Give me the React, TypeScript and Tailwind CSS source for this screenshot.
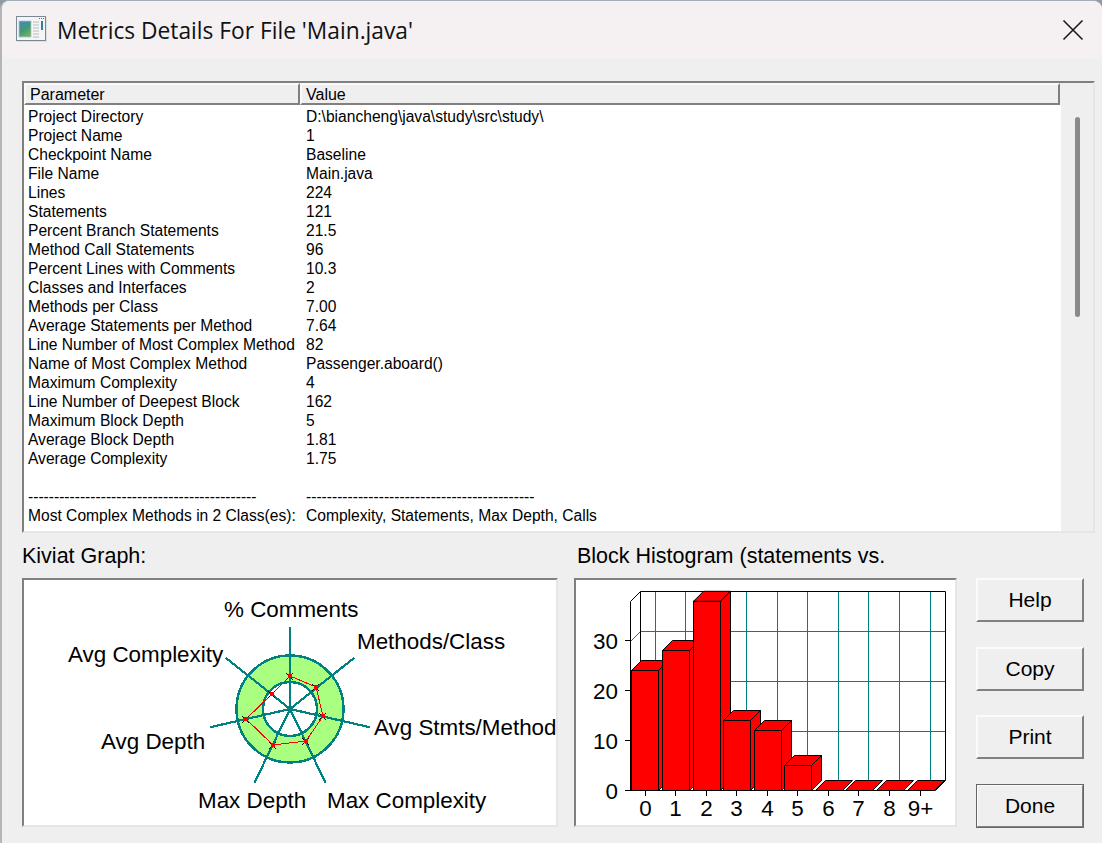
const rows: [string, string][] = [
  ['Project Directory', 'D:\\biancheng\\java\\study\\src\\study\\'],
  ['Project Name', '1'],
  ['Checkpoint Name', 'Baseline'],
  ['File Name', 'Main.java'],
  ['Lines', '224'],
  ['Statements', '121'],
  ['Percent Branch Statements', '21.5'],
  ['Method Call Statements', '96'],
  ['Percent Lines with Comments', '10.3'],
  ['Classes and Interfaces', '2'],
  ['Methods per Class', '7.00'],
  ['Average Statements per Method', '7.64'],
  ['Line Number of Most Complex Method', '82'],
  ['Name of Most Complex Method', 'Passenger.aboard()'],
  ['Maximum Complexity', '4'],
  ['Line Number of Deepest Block', '162'],
  ['Maximum Block Depth', '5'],
  ['Average Block Depth', '1.81'],
  ['Average Complexity', '1.75'],
  ['', ''],
  ['--------------------------------------------', '--------------------------------------------'],
  ['Most Complex Methods in 2 Class(es):', 'Complexity, Statements, Max Depth, Calls'],
]

function TitleIcon() {
  return (
    <svg width="32" height="28" viewBox="0 0 32 28" className="mr-[10px]">
      <defs>
        <linearGradient id="pane" x1="0" y1="0" x2="0.5" y2="1">
          <stop offset="0" stopColor="#4a86b8" />
          <stop offset="0.6" stopColor="#3f9a78" />
          <stop offset="1" stopColor="#6fae5a" />
        </linearGradient>
      </defs>
      <rect x="2" y="1" width="30" height="25" fill="#c9ced3" opacity="0.5" />
      <rect x="1.5" y="0.5" width="29" height="24" fill="#f3f5f7" stroke="#7d8791" />
      <path d="M24 2.5h1M26 2.5h1M28 2.5h1" stroke="#5f6973" />
      <rect x="4" y="5" width="12" height="16" fill="url(#pane)" stroke="#a9c3dc" strokeWidth="0.8" />
      <path d="M18 6h6M18 9h6M18 12h6M18 15h6M18 18h6M18 21h6" stroke="#b9bdb8" />
      <rect x="26" y="5" width="2" height="9" fill="#2f7fa0" />
    </svg>
  )
}

function CloseIcon() {
  return (
    <svg width="22" height="22" viewBox="0 0 22 22">
      <path d="M1.5 1.5 20.5 20.5M20.5 1.5 1.5 20.5" stroke="#1a1a1a" strokeWidth="1.6" />
    </svg>
  )
}

function Sunken({ className, children }: { className: string; children: React.ReactNode }) {
  return (
    <div className={`bg-white border-2 border-t-[#808080] border-l-[#808080] border-r-[#e6e6e6] border-b-[#e6e6e6] ${className}`}>
      {children}
    </div>
  )
}

const center = { x: 290, y: 709 }
const axes = Array.from({ length: 7 }, (_, i) => {
  const a = (i * 2 * Math.PI) / 7
  return { x: center.x + 82 * Math.sin(a), y: center.y - 82 * Math.cos(a) }
})
const kiviatPoints = '290,676 316,687 323,716 306,741 273,745 246,719 272,694'
const kiviatLabels: [string, number, number][] = [
  ['% Comments', 224, 617],
  ['Methods/Class', 357, 649],
  ['Avg Stmts/Method', 374, 735],
  ['Max Complexity', 327, 808],
  ['Max Depth', 198, 808],
  ['Avg Depth', 101, 749],
  ['Avg Complexity', 68, 662],
]

function Kiviat() {
  return (
    <svg width="532" height="245" viewBox="24 580 532 245" className="block">
      <g shapeRendering="crispEdges">
        <circle cx="290" cy="709" r="53.5" fill="#aaff80" stroke="#008080" strokeWidth="2.4" />
        <circle cx="290" cy="709" r="27" fill="#ffffff" stroke="#008080" strokeWidth="2.4" />
        {axes.map((p) => (
          <line key={p.x} x1="290" y1="709" x2={p.x} y2={p.y} stroke="#008080" strokeWidth="2.2" />
        ))}
        <polygon points={kiviatPoints} fill="none" stroke="#ff0000" strokeWidth="1" />
        {kiviatPoints.split(' ').map((p) => {
          const [x, y] = p.split(',').map(Number)
          return (
            <g key={p}>
              <path d={`M${x - 4} ${y - 3}L${x + 3} ${y + 4}M${x + 3} ${y - 3}L${x - 4} ${y + 4}`} stroke="#000" strokeWidth="1" />
              <circle cx={x} cy={y} r="2.4" fill="#ff0000" />
            </g>
          )
        })}
      </g>
      {kiviatLabels.map(([t, x, y]) => (
        <text key={t} x={x} y={y} fontSize="22.4" fill="#000" fontFamily="'Liberation Sans', Arial, sans-serif">
          {t}
        </text>
      ))}
    </svg>
  )
}

const barX = [631, 662, 693, 723, 754, 784, 815, 845, 876, 907]
const barVal = [24, 28, 38, 14, 12, 5, 0, 0, 0, 0]
const tickX = [645, 675, 706, 736, 767, 797, 828, 858, 889, 920]
const tickLabels = ['0', '1', '2', '3', '4', '5', '6', '7', '8', '9+']
const gridX = [655.5, 685.5, 716.5, 746.5, 777.5, 807.5, 838.5, 868.5, 899.5, 930.5]
const gridY = [631.5, 681.5, 731.5]

function Histogram() {
  return (
    <svg width="379" height="245" viewBox="576 580 379 245" className="block">
      {gridX.map((x) => (
        <line key={x} x1={x} y1="591" x2={x} y2="780" stroke="#008080" strokeWidth="1" />
      ))}
      {gridY.map((y) => (
        <g key={y}>
          <line x1="640" y1={y} x2="945" y2={y} stroke="#008080" strokeWidth="1" />
          <line x1="630.5" y1={y + 10} x2="640.5" y2={y} stroke="#008080" strokeWidth="1" />
        </g>
      ))}
      <path d="M640.5 591.5H945.5V780.5H940M640.5 591.5V780M640.5 591.5L630.5 601.5V790.5M945.5 780.5L935.5 790.5H625" fill="none" stroke="#000" strokeWidth="1" />
      {[0, 10, 20, 30].map((v) => (
        <line key={v} x1="625" y1={790.5 - v * 5} x2="631" y2={790.5 - v * 5} stroke="#000" strokeWidth="1" />
      ))}
      {barX.map((x, i) => {
        const top = 790.5 - barVal[i] * 5 + (barVal[i] === 38 ? 0.8 : 0)
        const left = x + 0.5
        const right = left + 27
        return (
          <g key={x} stroke="#000" strokeWidth="1" fill="#ff0000">
            {barVal[i] > 0 && <rect x={left} y={top} width="27" height={790.5 - top} />}
            <polygon points={`${left},${top} ${left + 10},${top - 10} ${right + 10},${top - 10} ${right},${top}`} />
            {barVal[i] > 0 && <polygon points={`${right},${top} ${right + 10},${top - 10} ${right + 10},780.5 ${right},790.5`} />}
          </g>
        )
      })}
      {tickX.map((x, i) => (
        <g key={x}>
          <line x1={x + 0.5} y1="790" x2={x + 0.5} y2="796" stroke="#000" strokeWidth="1" />
          <text x={x + 0.5} y="816" fontSize="22.4" textAnchor="middle" fill="#000" fontFamily="'Liberation Sans', Arial, sans-serif">
            {tickLabels[i]}
          </text>
        </g>
      ))}
      {[0, 10, 20, 30].map((v) => (
        <text key={v} x="618" y={799 - v * 5} fontSize="22.4" textAnchor="end" fill="#000" fontFamily="'Liberation Sans', Arial, sans-serif">
          {v}
        </text>
      ))}
    </svg>
  )
}

function DialogButton({ label, primary, className = '' }: { label: string; primary?: boolean; className?: string }) {
  return (
    <button
      className={`w-[108px] h-[44px] bg-[#efefef] text-[21px] text-black border-2 border-t-[#fbfbfb] border-l-[#fbfbfb] border-r-[#808080] border-b-[#808080] ${
        primary ? 'outline outline-1 -outline-offset-1 outline-[#666666]' : ''
      } ${className}`}
    >
      {label}
    </button>
  )
}

export default function App() {
  return (
    <div className="w-[1102px] h-[843px] overflow-hidden bg-[#8f9aa6] font-['Liberation_Sans',Arial,sans-serif]">
      <div className="h-full rounded-t-[9px] overflow-hidden bg-[#efefef] border-t border-t-[#a3adb8] border-l-2 border-l-[#b5b5b5] flex flex-col">
        <div className="h-[58px] shrink-0 bg-[#f5f0f2] flex items-center pl-[13px] pr-[18px]">
          <TitleIcon />
          <span className="mt-[3px] font-['Open_Sans',sans-serif] text-[22.75px] text-[#111111]">Metrics Details For File 'Main.java'</span>
          <span className="ml-auto flex">
            <CloseIcon />
          </span>
        </div>
        <div className="pl-[20px] pt-[22px]">
          <Sunken className="w-[1073px] h-[452px] flex overflow-hidden">
            <div className="w-[1037px] shrink-0">
              <div className="flex h-[22px] text-[16px] bg-[#efefef]">
                <div className="w-[276px] pl-[4px] border-2 border-t-[#fafafa] border-l-[#fafafa] border-r-[#808080] border-b-[#808080] leading-[20px]">Parameter</div>
                <div className="w-[760px] pl-[4px] border-2 border-t-[#fafafa] border-l-[#fafafa] border-r-[#808080] border-b-[#808080] leading-[20px]">Value</div>
              </div>
              <div className="pt-[2px]">
                {rows.map(([name, value], i) => (
                  <div key={i} className="flex h-[19px] text-[15.6px] leading-[19px] text-black whitespace-nowrap">
                    <div className="w-[278px] pl-[4px]">{name}</div>
                    <div className="pl-[4px]">{value}</div>
                  </div>
                ))}
              </div>
            </div>
            <div className="flex-1 bg-[#efefef] pt-[34px] pl-[14px]">
              <div className="w-[5px] h-[200px] rounded-full bg-[#8a8a8a]" />
            </div>
          </Sunken>
          <div className="flex mt-[9px]">
            <div className="w-[552px]">
              <div className="h-[36px] text-[21.5px] leading-[29px] text-black">Kiviat Graph:</div>
              <Sunken className="w-[536px] h-[249px]">
                <Kiviat />
              </Sunken>
            </div>
            <div className="w-[402px]">
              <div className="h-[36px] text-[21.5px] leading-[29px] pl-[3px] text-black">Block Histogram (statements vs.</div>
              <Sunken className="w-[383px] h-[249px]">
                <Histogram />
              </Sunken>
            </div>
            <div className="pt-[36px] flex flex-col">
              <DialogButton label="Help" className="mb-[25px]" />
              <DialogButton label="Copy" className="mb-[24px]" />
              <DialogButton label="Print" className="mb-[25px]" />
              <DialogButton label="Done" primary />
            </div>
          </div>
        </div>
      </div>
    </div>
  )
}
